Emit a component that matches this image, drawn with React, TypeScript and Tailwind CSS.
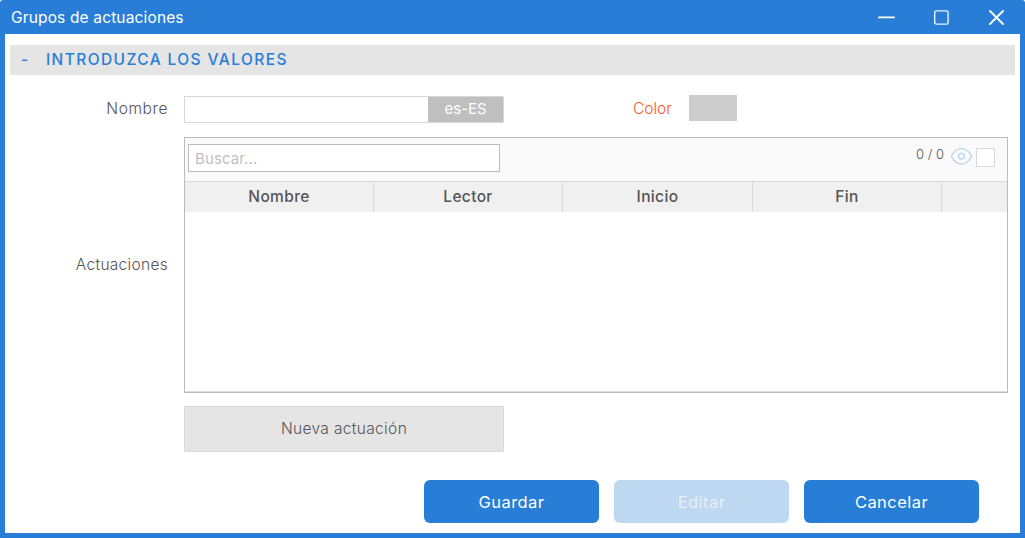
import React, { useState } from 'react';

const columns = ['Nombre', 'Lector', 'Inicio', 'Fin'];

const WindowControls: React.FC = () => (
  <svg
    width="126"
    height="16"
    viewBox="0 0 126 16"
    fill="none"
    stroke="#fff"
    strokeLinecap="round"
    className="block"
  >
    <path d="M1 8.4h15" strokeWidth="1.9" />
    <rect x="56.7" y="1.9" width="13.4" height="13.2" rx="1.6" strokeWidth="1.4" opacity="0.9" />
    <path d="M112 2l13 13M125 2l-13 13" strokeWidth="1.8" />
  </svg>
);

const EyeIcon: React.FC = () => (
  <svg width="22" height="18" viewBox="0 0 22 18" fill="none" stroke="#b9d4ef" strokeWidth="1.3">
    <path d="M.3 9.3C2.700 4.600 6.300 1.600 10.500 1.600S18.300 4.600 20.700 9.300C18.300 14 14.700 17 10.500 17S2.700 14 .3 9.300z" />
    <circle cx="10.500" cy="9.300" r="2.900" />
  </svg>
);

const App: React.FC = () => {
  const [name, setName] = useState('');
  const [search, setSearch] = useState('');
  const [open, setOpen] = useState(true);

  return (
    <div className="flex h-[538px] w-[1025px] flex-col overflow-hidden rounded-t-[3px] bg-[#287dd7] px-[5px] pb-[5px] font-['Inter',sans-serif] text-[15.5px] font-light text-[#555]">
      <header className="flex h-[34px] shrink-0 items-center justify-between pr-[16px] pl-[6px] font-normal text-white">
        <h1 className="pt-px text-[15.5px] leading-[34px] tracking-[0.15px]">Grupos de actuaciones</h1>
        <WindowControls />
      </header>

      <main className="flex flex-1 flex-col bg-white pt-[11px]">
        <button
          onClick={() => setOpen(!open)}
          className="mx-[5px] flex h-[30px] shrink-0 items-center bg-[#e5e5e5] pl-[11px] text-left text-[15.5px] font-medium text-[#287dd7]"
        >
          <span className="w-[25px]">{open ? '-' : '+'}</span>
          <span className="tracking-[1.4px]">INTRODUZCA LOS VALORES</span>
        </button>

        {open && (
          <div className="grid grid-cols-[163px_824px] gap-x-[16px]">
            <label className="pt-[21px] text-right leading-[26px] tracking-[0.6px]">Nombre</label>
            <div className="flex h-[62px] items-start pt-[20px]">
              <div className="mt-px flex h-[27px] w-[320px] border border-[#d8d8d8]">
                <input
                  value={name}
                  onChange={(e) => setName(e.target.value)}
                  className="w-[243px] px-1.5 outline-none"
                />
                <span className="flex-1 bg-[#bfbfbf] text-center text-[15px] leading-[24px] font-normal text-white">
                  es-ES
                </span>
              </div>
              <span className="ml-[129px] w-[56px] leading-[28px] text-[#ff5722]">Color</span>
              <div className="h-[26px] w-[48px] bg-[#ccc]" />
            </div>

            <label className="self-center text-right tracking-[0.3px]">Actuaciones</label>
            <section className="flex h-[256px] flex-col border border-[#bbb]">
              <div className="flex h-[43px] items-start justify-between bg-[#fafafa] pt-[6px] pr-[12px] pl-[3px]">
                <input
                  value={search}
                  onChange={(e) => setSearch(e.target.value)}
                  placeholder="Buscar..."
                  className="h-[28px] w-[312px] border border-[#bbb] bg-white px-[6px] pt-px text-[15px] font-normal tracking-[0.1px] outline-none placeholder:text-[#bfbfbf]"
                />
                <div className="flex items-start text-[13px] leading-[21px]">
                  <span className="mr-[7px]">0 / 0</span>
                  <div className="mt-[3px] mr-[3px]">
                    <EyeIcon />
                  </div>
                  <div className="mt-[4px] h-[19px] w-[19px] border border-[#d9d9d9] bg-white" />
                </div>
              </div>
              <div className="grid h-[31px] grid-cols-[189px_189px_190px_189px_1fr] border-t border-[#d9d9d9] bg-[#f0f0f0] text-center leading-[30px] font-medium tracking-[0.35px]">
                {columns.map((column) => (
                  <div key={column} className="border-r border-[#d9d9d9]">
                    {column}
                  </div>
                ))}
              </div>
              <div className="flex-1 border-b border-[#ddd]" />
            </section>

            <button className="col-start-2 mt-[13px] h-[46px] w-[320px] border border-[#d9d9d9] bg-[#e5e5e5] tracking-[0.35px]">
              Nueva actuación
            </button>
          </div>
        )}

        <footer className="mt-auto flex justify-end gap-[15px] pr-[41px] pb-[10px] text-[16.5px] font-normal tracking-[0.45px] text-white">
          <button className="h-[43px] w-[175px] rounded-[6px] bg-[#287dd7] pt-[2px]">Guardar</button>
          <button
            disabled
            className="h-[43px] w-[175px] rounded-[6px] bg-[#bed8f2] pt-[2px] text-[#e8eef5]"
          >
            Editar
          </button>
          <button className="h-[43px] w-[175px] rounded-[6px] bg-[#287dd7] pt-[2px]">
            Cancelar
          </button>
        </footer>
      </main>
    </div>
  );
};

export default App;
